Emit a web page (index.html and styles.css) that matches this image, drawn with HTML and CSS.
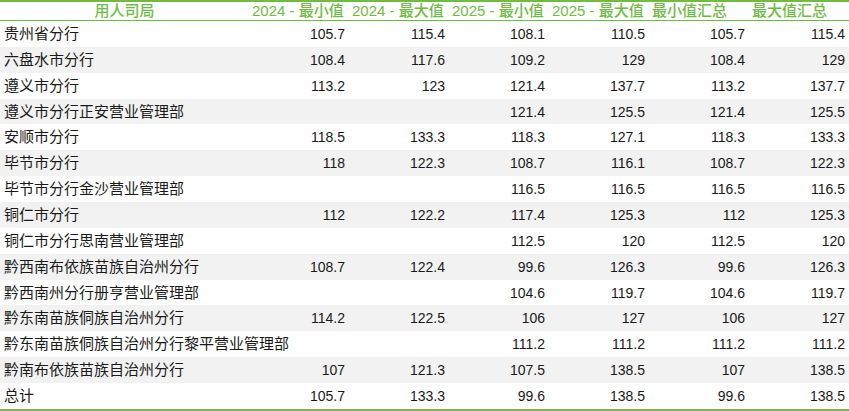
FILE: index.html
```html
<!DOCTYPE html>
<html lang="zh">
<head>
<meta charset="utf-8">
<title>用人司局</title>
<link rel="stylesheet" href="styles.css">
</head>
<body>
<table class="pivot">
  <colgroup>
    <col class="c-name"><col class="c-num"><col class="c-num"><col class="c-num"><col class="c-num"><col class="c-num"><col class="c-num">
  </colgroup>
  <thead>
    <tr>
      <th class="h-name">用人司局</th>
      <th>2024 - 最小值</th>
      <th>2024 - 最大值</th>
      <th>2025 - 最小值</th>
      <th>2025 - 最大值</th>
      <th>最小值汇总</th>
      <th>最大值汇总</th>
    </tr>
  </thead>
  <tbody>
    <tr><td>贵州省分行</td><td>105.7</td><td>115.4</td><td>108.1</td><td>110.5</td><td>105.7</td><td>115.4</td></tr>
    <tr><td>六盘水市分行</td><td>108.4</td><td>117.6</td><td>109.2</td><td>129</td><td>108.4</td><td>129</td></tr>
    <tr><td>遵义市分行</td><td>113.2</td><td>123</td><td>121.4</td><td>137.7</td><td>113.2</td><td>137.7</td></tr>
    <tr><td>遵义市分行正安营业管理部</td><td></td><td></td><td>121.4</td><td>125.5</td><td>121.4</td><td>125.5</td></tr>
    <tr><td>安顺市分行</td><td>118.5</td><td>133.3</td><td>118.3</td><td>127.1</td><td>118.3</td><td>133.3</td></tr>
    <tr><td>毕节市分行</td><td>118</td><td>122.3</td><td>108.7</td><td>116.1</td><td>108.7</td><td>122.3</td></tr>
    <tr><td>毕节市分行金沙营业管理部</td><td></td><td></td><td>116.5</td><td>116.5</td><td>116.5</td><td>116.5</td></tr>
    <tr><td>铜仁市分行</td><td>112</td><td>122.2</td><td>117.4</td><td>125.3</td><td>112</td><td>125.3</td></tr>
    <tr><td>铜仁市分行思南营业管理部</td><td></td><td></td><td>112.5</td><td>120</td><td>112.5</td><td>120</td></tr>
    <tr><td>黔西南布依族苗族自治州分行</td><td>108.7</td><td>122.4</td><td>99.6</td><td>126.3</td><td>99.6</td><td>126.3</td></tr>
    <tr><td>黔西南州分行册亨营业管理部</td><td></td><td></td><td>104.6</td><td>119.7</td><td>104.6</td><td>119.7</td></tr>
    <tr><td>黔东南苗族侗族自治州分行</td><td>114.2</td><td>122.5</td><td>106</td><td>127</td><td>106</td><td>127</td></tr>
    <tr><td>黔东南苗族侗族自治州分行黎平营业管理部</td><td></td><td></td><td>111.2</td><td>111.2</td><td>111.2</td><td>111.2</td></tr>
    <tr><td>黔南布依族苗族自治州分行</td><td>107</td><td>121.3</td><td>107.5</td><td>138.5</td><td>107</td><td>138.5</td></tr>
    <tr class="total"><td>总计</td><td>105.7</td><td>133.3</td><td>99.6</td><td>138.5</td><td>99.6</td><td>138.5</td></tr>
  </tbody>
</table>
</body>
</html>
```
FILE: styles.css
```css
html, body {
  margin: 0;
  padding: 0;
  background: #ffffff;
}
.pivot {
  width: 849px;
  border-collapse: collapse;
  table-layout: fixed;
  font-family: "Liberation Sans", "Noto Sans CJK SC", sans-serif;
  font-size: 14px;
  color: #1a1a1a;
  border-top: 2px solid #74b84c;
  border-bottom: 2px solid #74b84c;
}
.c-name { width: 249px; }
.c-num { width: 100px; }
.pivot th {
  height: 18px;
  padding: 0 0 0 3px;
  text-align: left;
  font-size: 15px;
  font-weight: 500;
  color: #6fbc45;
  white-space: nowrap;
  overflow: hidden;
  border-bottom: 1px solid #74b84c;
  line-height: 18px;
}
.pivot th.h-name {
  text-align: center;
  padding: 0;
}
.pivot td {
  height: 25.87px;
  padding: 0 4px 0 4px;
  text-align: right;
  white-space: nowrap;
  line-height: 20px;
}
.pivot td:first-child {
  text-align: left;
  font-size: 15px;
}
.pivot tbody tr:nth-child(even) td {
  background: #f2f2f2;
}
```
